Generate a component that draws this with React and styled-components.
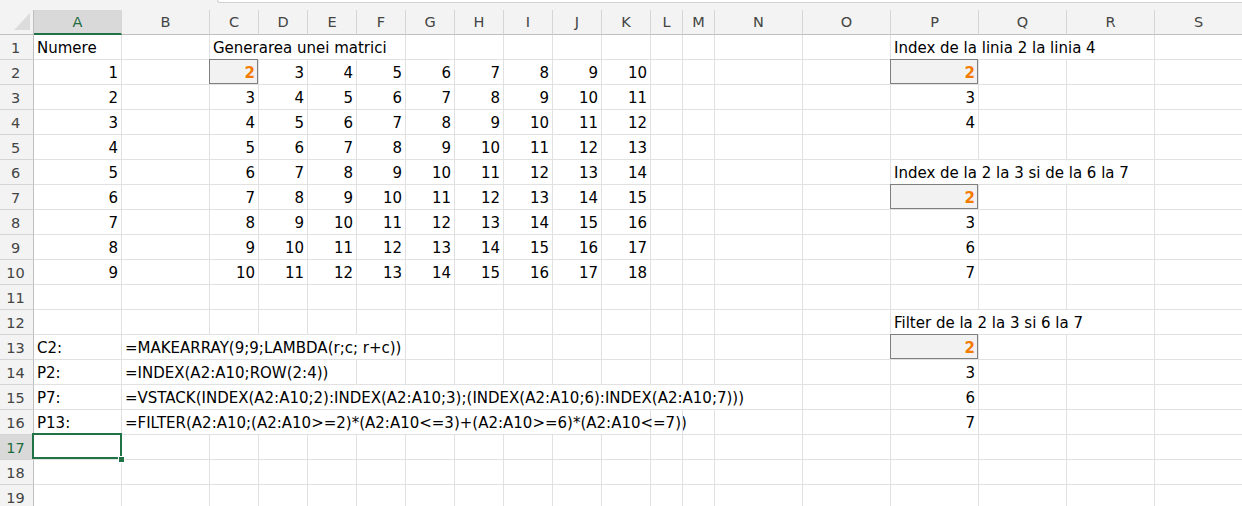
import React from 'react';
import styled, { createGlobalStyle, css } from 'styled-components';

const FONT = `"DejaVu Sans", "Open Sans", "Liberation Sans", Arial, sans-serif`;

const GlobalStyle = createGlobalStyle`
  html, body { margin: 0; padding: 0; background: #fff; }
  body { font-family: ${FONT}; overflow: hidden; }
`;

const COLS = [
  ['A', 88], ['B', 88], ['C', 49], ['D', 49], ['E', 49], ['F', 49], ['G', 49],
  ['H', 49], ['I', 49], ['J', 49], ['K', 49], ['L', 32], ['M', 32], ['N', 88],
  ['O', 88], ['P', 88], ['Q', 88], ['R', 88], ['S', 88],
];
const TEMPLATE = `34px ${COLS.map((c) => `${c[1]}px`).join(' ')}`;
const GREEN = '#217346';

const Sheet = styled.div`
  width: 1242px;
  height: 506px;
  overflow: hidden;
  background: #fff;
`;

const TopStrip = styled.div`
  display: flex;
  height: 10px;
  background: #f3f3f3;
`;

const StripGap = styled.div`
  width: 217px;
`;

const FormulaEdge = styled.div`
  flex: 1;
  height: 2px;
  background: #fff;
  border-left: 1px solid #d2d2d2;
  border-bottom: 1px solid #d2d2d2;
  border-bottom-left-radius: 4px;
`;

const Row = styled.div`
  display: grid;
  grid-template-columns: ${TEMPLATE};
  height: 25px;
`;

const Corner = styled.div`
  box-sizing: border-box;
  height: 25px;
  background: #f3f3f3;
  border-right: 1px solid #bfbfbf;
  border-bottom: 1px solid #bfbfbf;
  display: flex;
  align-items: flex-start;
  justify-content: flex-end;
  padding: 3px 3px 0 0;
`;

const ColHead = styled.div`
  box-sizing: border-box;
  height: 25px;
  background: ${(p) => (p.$active ? '#d9d9d9' : '#f3f3f3')};
  border-right: 1px solid #d5d5d5;
  border-bottom: ${(p) => (p.$active ? `2px solid ${GREEN}` : '1px solid #bfbfbf')};
  color: ${(p) => (p.$active ? '#1e6b41' : '#444')};
  font-size: 14.5px;
  padding-top: 2px;
  line-height: 21px;
  text-align: center;
`;

const RowHead = styled.div`
  box-sizing: border-box;
  height: 25px;
  background: ${(p) => (p.$active ? '#d9d9d9' : '#f3f3f3')};
  border-right: 1px solid #bfbfbf;
  border-bottom: 1px solid #d5d5d5;
  color: ${(p) => (p.$active ? '#1e6b41' : '#444')};
  font-size: 14.5px;
  line-height: 22px;
  padding: 2px 2px 0 0;
  text-align: center;
`;

const Cell = styled.div`
  position: relative;
  box-sizing: border-box;
  height: 25px;
  grid-column: span ${(p) => p.$span || 1};
  border-right: 1px solid #e1e1e1;
  border-bottom: 1px solid #e1e1e1;
  padding: 3px 3px 0;
  font-size: 15px;
  line-height: 21px;
  white-space: nowrap;
  text-align: ${(p) => p.$align || 'left'};
  color: #000;

  ${(p) =>
    p.$spill &&
    css`
      background: #f2f2f2;
      color: #f47a00;
      font-weight: 700;
      &::after {
        content: '';
        position: absolute;
        inset: -1px 0 0 -1px;
        border: 1px solid #7f7f7f;
        pointer-events: none;
      }
    `}

  ${(p) =>
    p.$selected &&
    css`
      &::after {
        content: '';
        position: absolute;
        inset: -2px -1px 0 -2px;
        border: 2px solid ${GREEN};
        pointer-events: none;
      }
    `}
`;

const FillHandle = styled.span`
  position: absolute;
  right: -4px;
  bottom: -4px;
  width: 5px;
  height: 5px;
  background: ${GREEN};
  border: 1px solid #fff;
  z-index: 1;
`;

const buildRows = () => {
  const rows = {};
  const put = (r, col, text, opts = {}) => {
    rows[r] = rows[r] || {};
    rows[r][col] = { text, ...opts };
  };
  put(1, 'A', 'Numere');
  put(1, 'C', 'Generarea unei matrici', { span: 4 });
  put(1, 'P', 'Index de la linia 2 la linia 4', { span: 3 });
  const matrixCols = ['C', 'D', 'E', 'F', 'G', 'H', 'I', 'J', 'K'];
  for (let r = 2; r <= 10; r++) {
    put(r, 'A', String(r - 1), { align: 'right' });
    matrixCols.forEach((c, j) => {
      put(r, c, String(r + j), { align: 'right', spill: r === 2 && j === 0 });
    });
  }
  [2, 3, 4].forEach((v, i) => put(2 + i, 'P', String(v), { align: 'right', spill: i === 0 }));
  put(6, 'P', 'Index de la 2 la 3 si de la 6 la 7', { span: 3 });
  [2, 3, 6, 7].forEach((v, i) => put(7 + i, 'P', String(v), { align: 'right', spill: i === 0 }));
  put(12, 'P', 'Filter de la 2 la 3 si 6 la 7', { span: 3 });
  [2, 3, 6, 7].forEach((v, i) => put(13 + i, 'P', String(v), { align: 'right', spill: i === 0 }));
  put(13, 'A', 'C2:');
  put(13, 'B', '=MAKEARRAY(9;9;LAMBDA(r;c; r+c))', { span: 5 });
  put(14, 'A', 'P2:');
  put(14, 'B', '=INDEX(A2:A10;ROW(2:4))', { span: 4 });
  put(15, 'A', 'P7:');
  put(15, 'B', '=VSTACK(INDEX(A2:A10;2):INDEX(A2:A10;3);(INDEX(A2:A10;6):INDEX(A2:A10;7)))', { span: 13 });
  put(16, 'A', 'P13:');
  put(16, 'B', '=FILTER(A2:A10;(A2:A10>=2)*(A2:A10<=3)+(A2:A10>=6)*(A2:A10<=7))', { span: 10 });
  put(17, 'A', '', { selected: true });
  return rows;
};

const ROWS = buildRows();
const ACTIVE_ROW = 17;
const ACTIVE_COL = 'A';

const SheetRow = ({ r }) => {
  const data = ROWS[r] || {};
  const cells = [];
  let i = 0;
  while (i < COLS.length) {
    const key = COLS[i][0];
    const d = data[key];
    const span = d?.span || 1;
    cells.push(
      <Cell
        key={key}
        $span={span}
        $align={d?.align}
        $spill={d?.spill}
        $selected={d?.selected}
      >
        {d?.text}
        {d?.selected && <FillHandle />}
      </Cell>
    );
    i += span;
  }
  return (
    <Row>
      <RowHead $active={r === ACTIVE_ROW}>{r}</RowHead>
      {cells}
    </Row>
  );
};

const SelectAll = () => (
  <svg width="16" height="18" viewBox="0 0 16 18">
    <polygon points="16,0 16,17 0,17" fill="#dcdcdc" />
  </svg>
);

export default function App() {
  const rowNums = Array.from({ length: 19 }, (_, k) => k + 1);
  return (
    <>
      <GlobalStyle />
      <Sheet>
        <TopStrip>
          <StripGap />
          <FormulaEdge />
        </TopStrip>
        <Row>
          <Corner>
            <SelectAll />
          </Corner>
          {COLS.map(([name]) => (
            <ColHead key={name} $active={name === ACTIVE_COL}>
              {name}
            </ColHead>
          ))}
        </Row>
        {rowNums.map((r) => (
          <SheetRow key={r} r={r} />
        ))}
      </Sheet>
    </>
  );
}
